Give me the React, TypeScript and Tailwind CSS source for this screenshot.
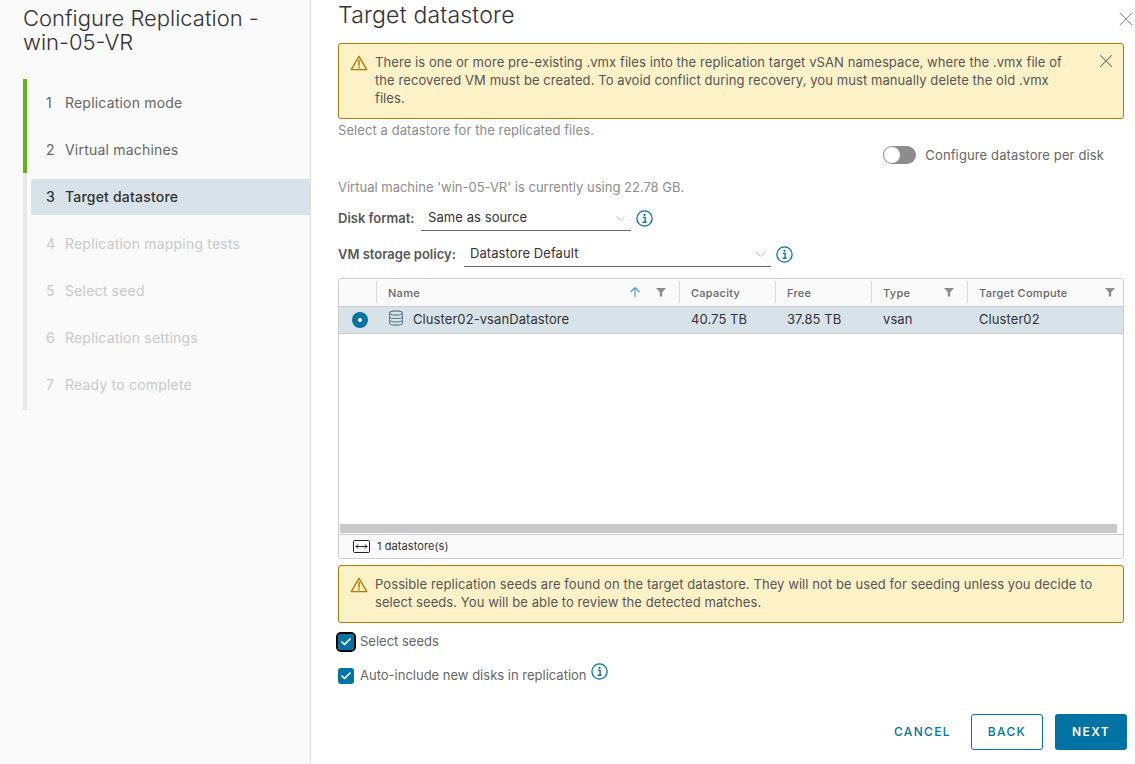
import { Check, ChevronDown, X } from 'lucide-react'

const steps = [
  { n: 1, label: 'Replication mode', state: 'done' },
  { n: 2, label: 'Virtual machines', state: 'done' },
  { n: 3, label: 'Target datastore', state: 'active' },
  { n: 4, label: 'Replication mapping tests', state: 'off' },
  { n: 5, label: 'Select seed', state: 'off' },
  { n: 6, label: 'Replication settings', state: 'off' },
  { n: 7, label: 'Ready to complete', state: 'off' },
]

function WarnIcon() {
  return (
    <svg width="18" height="16" viewBox="0 0 20 18" fill="none" className="shrink-0">
      <path d="M10 1.5 L18.8 16.5 H1.2 Z" stroke="#b27a00" strokeWidth="1.5" strokeLinejoin="round" />
      <path d="M10 6.2 V11.6" stroke="#b27a00" strokeWidth="1.7" strokeLinecap="round" />
      <circle cx="10" cy="14" r="1" fill="#b27a00" />
    </svg>
  )
}

function InfoIcon() {
  return (
    <svg width="17" height="17" viewBox="0 0 17 17" fill="none" className="shrink-0">
      <circle cx="8.5" cy="8.5" r="7.6" stroke="#0072a3" strokeWidth="1.3" />
      <circle cx="8.5" cy="4.9" r="1.1" fill="#0072a3" />
      <path d="M6.8 7.4 H9.1 V12 M6.6 12.3 H10.6" stroke="#0072a3" strokeWidth="1.4" />
    </svg>
  )
}

function FilterIcon() {
  return (
    <svg width="10" height="10" viewBox="0 0 10 10" className="shrink-0">
      <path d="M0 1 H10 L6.2 5.2 V9.5 L3.8 9.5 V5.2 Z" fill="#8c8c8c" />
    </svg>
  )
}

function Cb({ focus }: { focus?: boolean }) {
  return (
    <span
      className={`flex h-4 w-4 shrink-0 items-center justify-center rounded-[3px] bg-[#0072a3] ${
        focus ? 'outline-2 outline-offset-0 outline-black' : ''
      }`}
    >
      <Check size={12} strokeWidth={3.5} color="#fff" />
    </span>
  )
}

function HeaderCell({ label, filter, sort, last }: { label: string; filter?: boolean; sort?: boolean; last?: boolean }) {
  return (
    <div className={`flex h-[22px] items-center border-l border-[#d8d8d8] pl-[11px] ${last ? 'pr-2' : 'pr-[13px]'}`}>
      <span className="flex-1 pt-[3px] font-medium tracking-[0.28px] text-[#666666]">{label}</span>
      {sort && (
        <svg width="12" height="12" viewBox="0 0 12 12" fill="none" className="mr-[15px]">
          <path d="M6 11 V1.5 M1.5 6 L6 1.5 L10.5 6" stroke="#4a9fd0" strokeWidth="1.2" />
        </svg>
      )}
      {filter && <FilterIcon />}
    </div>
  )
}

export default function App() {
  return (
    <div className="flex h-screen overflow-hidden bg-white font-['Inter','Liberation_Sans',sans-serif] text-[13px] tracking-[0.08px] text-[#565656]">
      {/* Steps */}
      <aside className="w-[311px] shrink-0 border-r border-[#dedede] bg-[#fafafa] pl-[23px]">
        <h1 className="mt-[6px] w-[270px] text-[22px] font-light leading-6 tracking-normal text-[#333333]">
          Configure Replication - win-05-VR
        </h1>
        <div className="mt-[25px] flex">
          <div className="h-[331px] w-1 bg-[#e8e8e8]">
            <div className="h-[94px] w-1 bg-[#60b515]" />
          </div>
          <nav className="flex-1 pl-1 pt-[6px]">
            {steps.map((s) => (
              <div
                key={s.n}
                className={`mb-[11px] flex h-9 items-center rounded-l-[3px] pb-[2px] pl-[15px] text-[14px] tracking-[0.2px] ${
                  s.state === 'active'
                    ? 'bg-[#d8e3e9] font-medium text-[#333333]'
                    : s.state === 'off'
                      ? 'text-[#c9c9c9]'
                      : 'text-[#666666]'
                }`}
              >
                <span className="w-[19px]">{s.n}</span>
                {s.label}
              </div>
            ))}
          </nav>
        </div>
      </aside>

      {/* Main */}
      <main className="relative flex-1 pl-[27px] pr-[11px]">
        <X size={24} strokeWidth={1} color="#8c8c8c" className="absolute right-[-3px] top-[7px]" />
        <h2 className="h-[43px] pt-[1px] text-[23px] font-light leading-7 tracking-[0.2px] text-[#333333]">Target datastore</h2>

        <div className="relative h-[76px] rounded-[3px] border border-[#b27a00] bg-[#fdf1c7] py-[9px] pl-[36px] pr-[60px] leading-[18px] text-[#565656]">
          <span className="absolute left-[11px] top-[11px]">
            <WarnIcon />
          </span>
          There is one or more pre-existing .vmx files into the replication target vSAN namespace, where the .vmx file of the recovered VM must be created. To avoid conflict during recovery, you must manually delete the old .vmx files.
          <X size={22} strokeWidth={1.1} color="#666666" className="absolute right-[6px] top-[6px]" />
        </div>

        <p className="mt-[2px] text-[#8c8c8c]">Select a datastore for the replicated files.</p>

        <div className="mt-[5px] flex items-center justify-end pr-[20px] tracking-[0.12px] text-[#666666]">
          <span className="mr-[9px] flex h-[18px] w-[33px] items-center rounded-full bg-[#8c8c8c] pl-[1px]">
            <span className="h-4 w-4 rounded-full bg-white" />
          </span>
          Configure datastore per disk
        </div>

        <p className="mt-[13px] tracking-normal text-[#8c8c8c]">Virtual machine 'win-05-VR' is currently using 22.78 GB.</p>

        <div className="mt-[9px] flex h-[24px] items-center">
          <span className="w-[76px] whitespace-nowrap font-semibold tracking-normal text-[#565656]">Disk format:</span>
          <span className="ml-[7px] flex h-[24px] w-[210px] items-center justify-between border-b border-[#666666] pl-[7px] pr-[3px] text-[#333333]">
            Same as source
            <ChevronDown size={15} strokeWidth={1} color="#9a9a9a" />
          </span>
          <span className="ml-[5px]">
            <InfoIcon />
          </span>
        </div>

        <div className="mt-[12px] flex h-[24px] items-center">
          <span className="w-[119px] whitespace-nowrap font-semibold tracking-normal text-[#565656]">VM storage policy:</span>
          <span className="ml-[7px] flex h-[24px] w-[307px] items-center justify-between border-b border-[#666666] pl-[6px] pr-[3px] text-[#333333]">
            Datastore Default
            <ChevronDown size={15} strokeWidth={1} color="#9a9a9a" />
          </span>
          <span className="ml-[5px]">
            <InfoIcon />
          </span>
        </div>

        {/* Table */}
        <div className="mt-[11px] flex h-[281px] w-[786px] flex-col overflow-hidden rounded-[3px] border border-[#cccccc]">
          <div className="grid h-[28px] grid-cols-[37px_303px_96px_96px_96px_1fr] items-center border-b border-[#cccccc] bg-[#fafafa] text-[11px]">
            <div className="ml-[37px] h-[22px] border-l border-[#d8d8d8]" />
            <HeaderCell label="Name" filter sort />
            <HeaderCell label="Capacity" />
            <HeaderCell label="Free" />
            <HeaderCell label="Type" filter />
            <HeaderCell label="Target Compute" filter last />
          </div>
          <div className="grid h-[27px] grid-cols-[37px_303px_96px_96px_96px_1fr] items-center border-b border-[#cccccc] bg-[#d8e3e9] text-[#333333]">
            <span className="flex justify-center pl-[4px]">
              <span className="flex h-4 w-4 items-center justify-center rounded-full bg-[#0072a3]">
                <span className="h-1 w-1 rounded-full bg-white" />
              </span>
            </span>
            <div className="flex items-center pl-[12px]">
              <svg width="16" height="16" viewBox="0 0 15 15" fill="none" className="mb-[3px] mr-[9px]" stroke="#5c7a8c">
                <ellipse cx="7.5" cy="2.8" rx="6" ry="2" />
                <path d="M1.5 2.8 V12.2 C1.5 13.3 4 14.2 7.5 14.2 S13.5 13.3 13.5 12.2 V2.8 M1.5 6 C1.5 7.1 4 8 7.5 8 S13.5 7.1 13.5 6 M1.5 9.2 C1.5 10.3 4 11.2 7.5 11.2 S13.5 10.3 13.5 9.2" />
              </svg>
              Cluster02-vsanDatastore
            </div>
            <span className="pl-[12px]">40.75 TB</span>
            <span className="pl-[12px]">37.85 TB</span>
            <span className="pl-[12px]">vsan</span>
            <span className="pl-[12px]">Cluster02</span>
          </div>
          <div className="flex-1" />
          <div className="mx-[1px] mb-px h-[9px] w-[777px] bg-[#cacaca]" />
          <div className="flex h-[24px] items-center border-t border-[#cccccc] bg-[#fafafa] pl-[14px] text-[11px] text-[#333333]">
            <svg width="17" height="13" viewBox="0 0 17 13" fill="none" stroke="#222222" className="mr-[7px]">
              <rect x="0.5" y="0.5" width="16" height="12" rx="1" />
              <path d="M3 6.5 H14 M5 4.5 L3 6.5 L5 8.5 M12 4.5 L14 6.5 L12 8.5" />
            </svg>
            1 datastore(s)
          </div>
        </div>

        <div className="relative mt-[6px] h-[58px] w-[786px] rounded-[3px] border border-[#b27a00] bg-[#fdf1c7] py-[9px] pl-[36px] pr-[20px] leading-[18px]">
          <span className="absolute left-[11px] top-[11px]">
            <WarnIcon />
          </span>
          Possible replication seeds are found on the target datastore. They will not be used for seeding unless you decide to select seeds. You will be able to review the detected matches.
        </div>

        <div className="mt-[10px] flex h-[18px] items-center gap-[6px] tracking-normal text-[#666666]">
          <Cb focus />
          Select seeds
        </div>
        <div className="mt-[16px] flex h-[18px] items-center gap-[6px] tracking-normal text-[#666666]">
          <Cb />
          Auto-include new disks in replication
          <span className="-ml-[2px] mb-[8px]">
            <InfoIcon />
          </span>
        </div>

        <div className="absolute bottom-[14px] right-[8px] flex items-center text-[12px] font-medium tracking-[1.35px]">
          <button className="mr-[20px] text-[#0072a3]">CANCEL</button>
          <button className="mr-3 h-9 w-[72px] rounded-[3px] border border-[#0072a3] text-[#0072a3]">BACK</button>
          <button className="h-9 w-[72px] rounded-[3px] bg-[#0072a3] font-semibold text-white">NEXT</button>
        </div>
      </main>
    </div>
  )
}
